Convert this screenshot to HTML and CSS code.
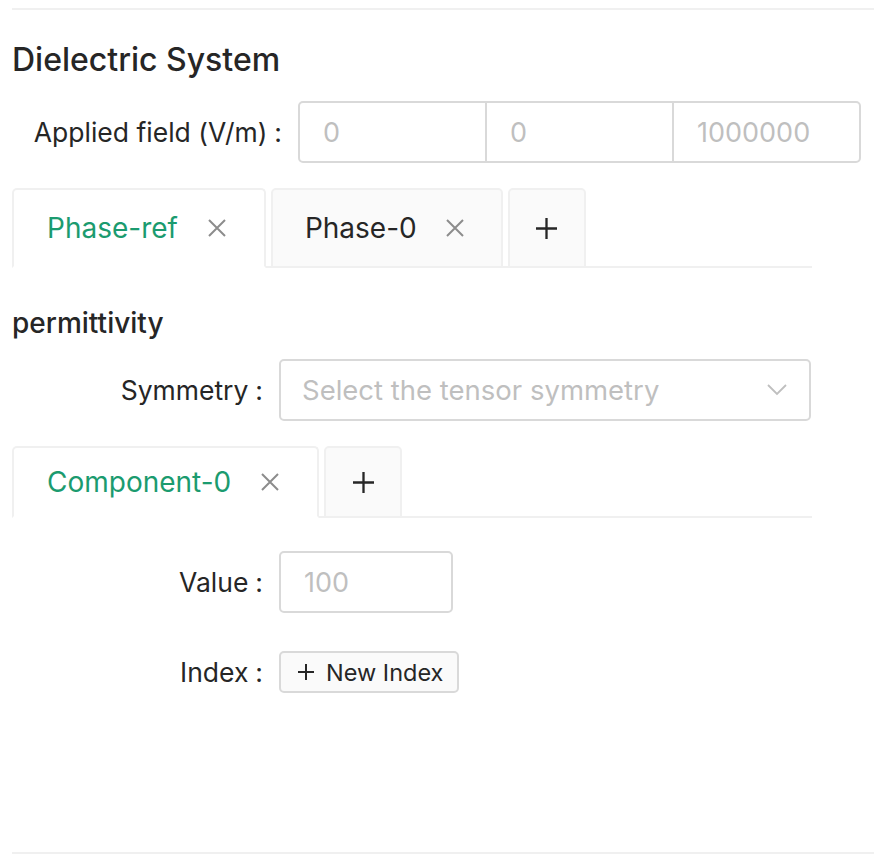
FILE: index.html
```html
<!DOCTYPE html>
<html lang="en">
<head>
<meta charset="utf-8">
<title>Dielectric System</title>
<link rel="stylesheet" href="styles.css">
</head>
<body>
<div class="page">
  <div class="rule rule-top"></div>
  <h2 class="title">Dielectric System</h2>

  <div class="field field-wide">
    <label class="label">Applied field (V/m)</label>
    <div class="input-group">
      <input class="input" placeholder="0">
      <input class="input" placeholder="0">
      <input class="input" placeholder="1000000">
    </div>
  </div>

  <div class="tabs tabs-lg">
    <div class="tab active"><span>Phase-ref</span>
      <svg class="close" viewBox="0 0 18 18"><path d="M1 1L17 17M17 1L1 17"/></svg>
    </div>
    <div class="tab tab-second"><span>Phase-0</span>
      <svg class="close" viewBox="0 0 18 18"><path d="M1 1L17 17M17 1L1 17"/></svg>
    </div>
    <div class="tab tab-add">
      <svg class="plus" viewBox="0 0 20 20"><path d="M10 0V20M0 10H20"/></svg>
    </div>
  </div>

  <h3 class="subtitle">permittivity</h3>

  <div class="field field-form">
    <label class="label">Symmetry</label>
    <div class="select">
      <span class="placeholder">Select the tensor symmetry</span>
      <svg class="chevron" viewBox="0 0 20 12"><path d="M1 1L10 10L19 1"/></svg>
    </div>
  </div>

  <div class="tabs tabs-sm">
    <div class="tab active"><span>Component-0</span>
      <svg class="close" viewBox="0 0 18 18"><path d="M1 1L17 17M17 1L1 17"/></svg>
    </div>
    <div class="tab tab-add">
      <svg class="plus" viewBox="0 0 20 20"><path d="M10 0V20M0 10H20"/></svg>
    </div>
  </div>

  <div class="field field-form field-value">
    <label class="label">Value</label>
    <input class="input input-single" placeholder="100">
  </div>

  <div class="field field-form field-index">
    <label class="label">Index</label>
    <button class="btn" type="button">
      <svg class="btn-plus" viewBox="0 0 16 16"><path d="M8 0V16M0 8H16"/></svg>
      <span>New Index</span>
    </button>
  </div>

  <div class="spacer"></div>
  <div class="rule rule-bottom"></div>
</div>
</body>
</html>
```

FILE: styles.css
```css
* { box-sizing: border-box; }

html, body {
  margin: 0;
  padding: 0;
  background: #ffffff;
}

body {
  font-family: Inter, "Noto Sans", "Liberation Sans", sans-serif;
  color: #262626;
  font-size: 26.5px;
}

.page {
  width: 884px;
  height: 864px;
  padding: 8px 10px 0 12px;
  display: flex;
  flex-direction: column;
}

.rule {
  height: 2px;
  background: #f0f0f0;
  width: 862px;
  flex: none;
}

.title {
  margin: 30px 0 0 0;
  font-size: 32px;
  font-weight: 500;
  line-height: 40px;
  color: #262626;
}

.field {
  display: flex;
  align-items: center;
  height: 62px;
  margin-top: 28px;
}

.field-wide {
  margin-top: 21px;
}

.label {
  flex: none;
  width: 267px;
  text-align: right;
  white-space: nowrap;
  line-height: 62px;
}

.label::after {
  content: ":";
  margin: 0 16px 0 7px;
}

.field-wide .label {
  width: 286px;
}

.input-group {
  display: flex;
  width: 563px;
  height: 62px;
}

.input {
  font-family: inherit;
  font-size: 27px;
  color: #262626;
  height: 62px;
  border: 2px solid #d9d9d9;
  background: #fff;
  padding: 0 23px;
  outline: none;
}

.input::placeholder {
  color: #bfbfbf;
}

.input-group .input {
  flex: 1 1 0;
  min-width: 0;
  border-radius: 0;
  margin-left: -2px;
}

.input-group .input:first-child {
  margin-left: 0;
  border-radius: 5px 0 0 5px;
}

.input-group .input:last-child {
  border-radius: 0 5px 5px 0;
}

.input-single {
  width: 174px;
  border-radius: 5px;
}

.tabs {
  display: flex;
  gap: 5px;
  width: 800px;
  border-bottom: 2px solid #f0f0f0;
  margin-top: 25px;
  flex: none;
}

.tab {
  display: flex;
  align-items: center;
  gap: 30px;
  padding: 0 38px 0 33px;
  font-size: 28px;
  background: #fafafa;
  border: 2px solid #f0f0f0;
  border-radius: 5px 5px 0 0;
  margin-bottom: -2px;
  white-space: nowrap;
}

.tab-second {
  padding: 0 37px 0 32px;
  gap: 29px;
}

.tabs-lg .tab { height: 80px; }
.tabs-sm .tab { height: 72px; }

.tab.active {
  background: #ffffff;
  border-bottom-color: #ffffff;
  color: #1b9b6f;
}

.tab-add {
  width: 78px;
  padding: 0;
  justify-content: center;
}

.close {
  width: 18px;
  height: 18px;
  flex: none;
}

.close path {
  stroke: #8c8c8c;
  stroke-width: 2;
  fill: none;
}

.plus {
  width: 21px;
  height: 21px;
}

.plus path {
  stroke: #262626;
  stroke-width: 2.2;
  fill: none;
}

.subtitle {
  margin: 37px 0 0 0;
  font-size: 28px;
  font-weight: 500;
  line-height: 36px;
}

.subtitle + .field { margin-top: 18px; }

.select {
  width: 532px;
  height: 62px;
  border: 2px solid #d9d9d9;
  border-radius: 5px;
  display: flex;
  align-items: center;
  justify-content: space-between;
  padding: 0 22px 0 21px;
  font-size: 27.5px;
}

.placeholder {
  color: #bfbfbf;
}

.chevron {
  width: 20px;
  height: 12px;
}

.chevron path {
  stroke: #bfbfbf;
  stroke-width: 1.8;
  fill: none;
}

.field-value { margin-top: 33px; }
.field-index { margin-top: 28px; }

.btn {
  display: flex;
  align-items: center;
  gap: 12px;
  height: 42px;
  width: 180px;
  padding: 0 10px 0 17px;
  font-family: inherit;
  font-size: 23.5px;
  color: #262626;
  background: #fafafa;
  border: 2px solid #d9d9d9;
  border-radius: 5px;
  white-space: nowrap;
}

.btn-plus {
  width: 16px;
  height: 16px;
  flex: none;
}

.btn-plus path {
  stroke: #262626;
  stroke-width: 2;
  fill: none;
}

.spacer {
  flex: 1 1 auto;
}

.rule-bottom {
  margin-bottom: 10px;
}
```
